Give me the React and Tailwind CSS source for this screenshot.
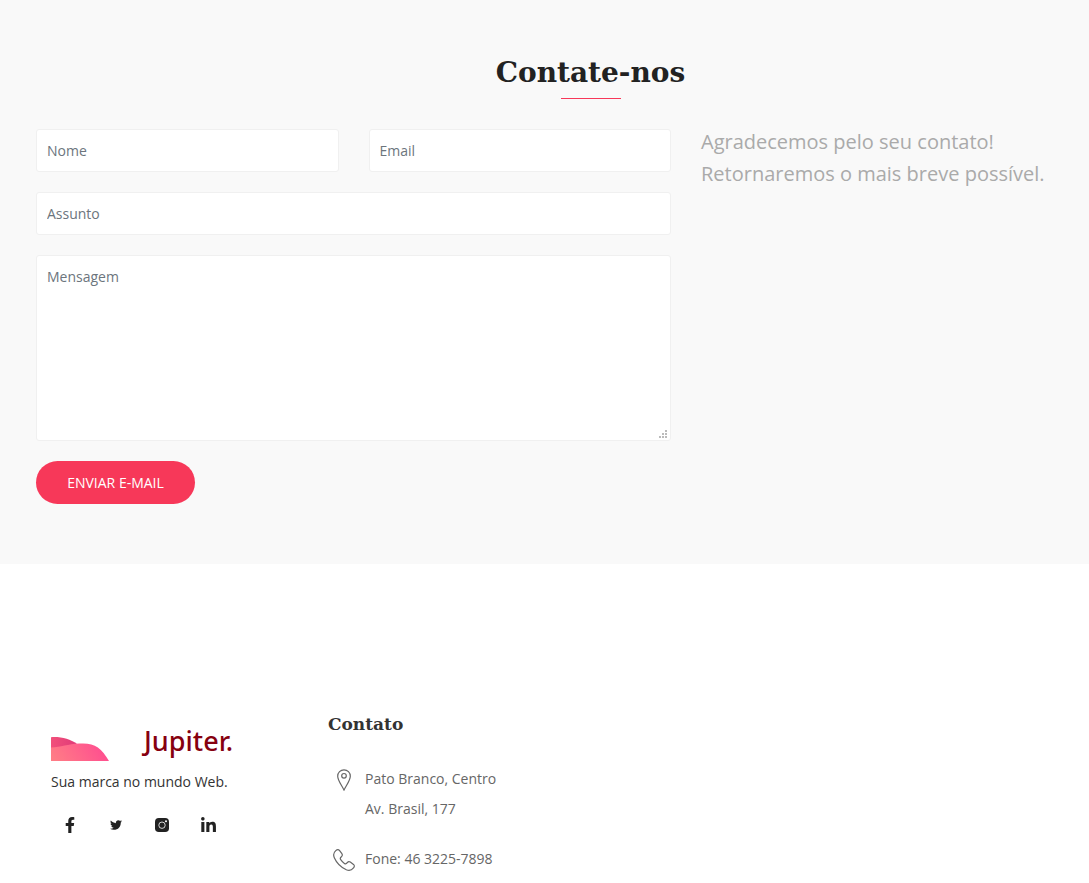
import { FaFacebookF, FaTwitter, FaLinkedinIn } from "react-icons/fa";

const field =
  "block w-full rounded-[3px] border border-[#f0f0f0] bg-white px-[10px] text-sm text-[#495057] placeholder:text-[#6c757d] placeholder:opacity-100 outline-none focus:border-[#f73859]";

function LogoMark() {
  return (
    <svg viewBox="0 0 58 24" className="h-6 w-[58px]" aria-hidden="true">
      <defs>
        <linearGradient id="back" x1="0" x2="1">
          <stop offset="0" stopColor="#f2507b" />
          <stop offset="1" stopColor="#e03a78" />
        </linearGradient>
        <linearGradient id="front" x1="0" x2="1" y1="0.6" y2="0.4">
          <stop offset="0" stopColor="#ff7c86" />
          <stop offset="1" stopColor="#ff4b90" />
        </linearGradient>
      </defs>
      <path d="M0 0.2C10 -0.5 19 2 26 7L22 14H0Z" fill="url(#back)" />
      <path d="M0 10.5C10 10.500 17 7 28 6.600C43 5.500 50 10 58 24H0Z" fill="url(#front)" />
    </svg>
  );
}

function InstagramIcon() {
  return (
    <svg viewBox="0 0 14 14" className="size-[14px]" aria-hidden="true">
      <rect width="14" height="14" rx="3.8" fill="#222" />
      <circle cx="7" cy="7.200" r="3.200" fill="none" stroke="#fff" strokeWidth="0.8" />
      <circle cx="11" cy="3.200" r="1" fill="#fff" />
    </svg>
  );
}

function PinIcon() {
  return (
    <svg viewBox="0 0 22 22" className="size-[22px]" fill="none" stroke="#666" strokeWidth="1.2" aria-hidden="true">
      <path d="M11 21.200C9.500 17.500 4.700 11.500 4.700 7.200C4.700 3.400 7.500 0.800 11 0.800S17.300 3.400 17.300 7.200C17.300 11.500 12.500 17.500 11 21.200Z" strokeLinejoin="round" />
      <circle cx="11" cy="6.800" r="2.300" />
    </svg>
  );
}

function PhoneIcon() {
  return (
    <svg viewBox="0 0 22 22" className="size-[22px]" fill="none" stroke="#666" strokeWidth="1.2" strokeLinejoin="round" aria-hidden="true">
      <path d="M2.800 1.600C4.200 0.400 5.600 0.400 6.600 1.600L8.900 4.700C9.600 5.900 9.400 6.900 8.400 7.700C7.100 8.700 6.900 9.500 7.700 10.700C8.800 12.300 9.900 13.400 11.400 14.400C12.600 15.200 13.400 14.900 14.300 13.700C15.100 12.600 16.200 12.400 17.300 13.100L20.500 15.400C21.600 16.300 21.600 17.700 20.500 18.900C18.500 21.400 16.400 22 13.300 20.700C7.800 18.200 3.700 14.100 1.300 8.700C0 5.600 0.500 3.500 2.800 1.600Z" />
    </svg>
  );
}

function ResizeGrip() {
  return (
    <svg viewBox="0 0 8 8" className="pointer-events-none absolute right-1 bottom-[3px] size-2" fill="#bbb" aria-hidden="true">
      <path d="M6 0h2v2H6zM3 3h2v2H3zM6 3h2v2H6zM0 6h2v2H0zM3 6h2v2H3zM6 6h2v2H6z" />
    </svg>
  );
}

const socials = [
  { label: "Facebook", icon: <FaFacebookF className="size-4" /> },
  { label: "Twitter", icon: <FaTwitter className="size-3" /> },
  { label: "Instagram", icon: <InstagramIcon /> },
  { label: "LinkedIn", icon: <FaLinkedinIn className="size-[17px]" /> },
];

export default function App() {
  return (
    <div className="bg-white font-['Open_Sans',sans-serif] text-sm text-[#666]">
      <section className="bg-[#f9f9f9] pt-[53px] pb-[60px] pl-9">
        <header className="flex flex-col items-center pl-[56px]">
          <h2 className="font-['DejaVu_Serif',serif] text-[28px] leading-10 font-bold text-[#222]">Contate-nos</h2>
          <span className="mt-[5px] h-px w-[60px] bg-[#f73859]" />
        </header>
        <div className="mt-[30px] grid grid-cols-[635fr_388fr] gap-[30px]">
          <form className="flex flex-col gap-5" onSubmit={(e) => e.preventDefault()}>
            <div className="grid grid-cols-2 gap-[30px]">
              <input type="text" aria-label="Nome" placeholder="Nome" className={`${field} h-[43px]`} />
              <input type="email" aria-label="Email" placeholder="Email" className={`${field} h-[43px]`} />
            </div>
            <input type="text" aria-label="Assunto" placeholder="Assunto" className={`${field} h-[43px]`} />
            <div className="relative">
              <textarea aria-label="Mensagem" placeholder="Mensagem" className={`${field} h-[186px] resize-none py-[10px] leading-[21px]`} />
              <ResizeGrip />
            </div>
            <button type="submit" className="h-[43px] w-[159px] rounded-full bg-[#f73859] text-sm text-white uppercase">
              Enviar e-mail
            </button>
          </form>
          <p className="-mt-[3px] text-xl leading-8 text-[#aaa]">
            Agradecemos pelo seu contato!
            <br />
            Retornaremos o mais breve possível.
          </p>
        </div>
      </section>

      <footer className="flex items-start pt-[146px] pl-[51px]">
        <div className="w-[277px] pt-[14px]">
          <div className="flex h-[37px] items-end gap-[35px]">
            <LogoMark />
            <span className="font-['Noto_Sans',sans-serif] text-[27px] leading-10 font-medium text-[#86000f]">Jupiter.</span>
          </div>
          <p className="mt-[10px] leading-[22px] text-[#333]">Sua marca no mundo Web.</p>
          <ul className="mt-[21px] flex text-[#222]">
            {socials.map((s) => (
              <li key={s.label} className="w-[46px]">
                <a href="#" aria-label={s.label} className="flex h-[22px] w-[38px] items-center justify-center">
                  {s.icon}
                </a>
              </li>
            ))}
          </ul>
        </div>
        <div>
          <h3 className="font-['DejaVu_Serif',serif] text-[17px] leading-7 font-bold text-[#333]">Contato</h3>
          <ul className="mt-[26px] flex flex-col gap-5 pl-[5px] leading-[30px]">
            <li className="flex gap-[10px]">
              <span className="pt-[5px]"><PinIcon /></span>
              <span>
                Pato Branco, Centro
                <br />
                Av. Brasil, 177
              </span>
            </li>
            <li className="flex gap-[10px]">
              <span className="pt-[5px]"><PhoneIcon /></span>
              <span>Fone: 46 3225-7898</span>
            </li>
          </ul>
        </div>
      </footer>
    </div>
  );
}
